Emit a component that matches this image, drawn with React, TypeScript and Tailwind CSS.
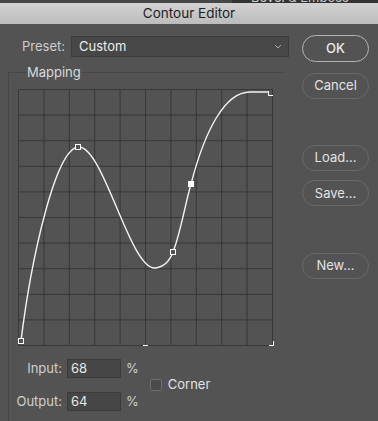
import React from "react";

const vLines = Array.from({ length: 11 }, (_, i) => 1.5 + i * 25.4);
const hLines = Array.from({ length: 11 }, (_, i) => 1.5 + i * 25.6);

const CurveGrid = () => {
  return (
    <svg width="260" height="262" className="block overflow-visible">
      {vLines.map((x) => (
        <line key={"v" + x} x1={x} y1={1.5} x2={x} y2={257.5} stroke="#383838" strokeWidth="1" />
      ))}
      {hLines.map((y) => (
        <line key={"h" + y} x1={1.5} y1={y} x2={255.5} y2={y} stroke="#383838" strokeWidth="1" />
      ))}
      <path
        d="M4,253 C14,172 38,62 61,59 C86,56 113,182 138,180 C148,179 153,172 156,164 C163,147 168,117 174,96 C188,42 208,4 233,4 L252,4"
        fill="none"
        stroke="#f2f2f2"
        strokeWidth="1.4"
      />
      <rect x="1.5" y="250.5" width="5" height="5" fill="#535353" stroke="#fff" strokeWidth="1" />
      <rect x="58.5" y="56.5" width="5" height="5" fill="#535353" stroke="#fff" strokeWidth="1" />
      <rect x="153.5" y="161.5" width="5" height="5" fill="#535353" stroke="#fff" strokeWidth="1" />
      <rect x="171" y="93" width="6" height="6" fill="#fff" />
      <path d="M251.5,3 V7.5 H256" fill="none" stroke="#fff" strokeWidth="1" />
      <path d="M126,257.5 H131" fill="none" stroke="#fff" strokeWidth="1" />
      <path d="M252,257.5 H256.5 V253" fill="none" stroke="#fff" strokeWidth="1" />
    </svg>
  );
};

const PillButton = ({ label, primary }: { label: string; primary?: boolean }) => {
  return (
    <button
      className={
        primary
          ? "w-[67px] h-[27px] rounded-full border-[1.5px] border-[#b4b4b4] text-[13px] font-medium text-[#ececec]"
          : "w-[67px] h-[26px] rounded-full border border-[#6a6a6a] text-[13px] text-[#e2e2e2]"
      }
    >
      {label}
    </button>
  );
};

const NumberRow = ({ label, value }: { label: string; value: string }) => {
  return (
    <div className="flex items-center">
      <span className="w-[53px] text-right text-[13px] text-[#cfcfcf]">{label}</span>
      <div className="ml-[5px] w-[54px] h-[19px] bg-[#464646] border border-[#3b3b3b] pl-[3px] text-[13px] leading-[17px] text-[#e6e6e6]">
        {value}
      </div>
      <span className="ml-[5px] text-[13px] text-[#cfcfcf]">%</span>
    </div>
  );
};

export default function App() {
  return (
    <div className="w-[378px] h-[421px] overflow-hidden bg-[#535353] font-['Inter','Liberation_Sans',sans-serif]">
      <div className="h-[3px] flex bg-[#474747]">
        <div className="ml-[232px] flex-1 bg-[#333] overflow-hidden">
          <div className="-mt-[10px] pl-[19px] text-[13px] leading-[14px] text-[#c9c9c9]">Bevel &amp; Emboss</div>
        </div>
      </div>
      <div className="h-[21px] flex items-center justify-center bg-gradient-to-b from-[#d2d2d2] to-[#bcbcbc] text-[13.5px] text-[#1f1f1f]">
        Contour Editor
      </div>
      <div className="flex">
        <div className="w-[291px] pt-[12px]">
          <div className="flex items-center pl-[22px]">
            <span className="text-[13px] text-[#cdcdcd]">Preset:</span>
            <div className="ml-[6px] w-[218px] h-[21px] flex items-center justify-between bg-[#474747] border border-[#3c3c3c] pl-[7px] pr-[6px]">
              <span className="text-[13px] text-[#ececec]">Custom</span>
              <svg width="8" height="5" viewBox="0 0 8 5">
                <path d="M1,1 L4,4 L7,1" fill="none" stroke="#a8a8a8" strokeWidth="1" />
              </svg>
            </div>
          </div>
          <fieldset className="ml-[8px] mt-[7px] w-[277px] h-[380px] border border-[#464646] border-r-transparent pl-0">
            <legend className="ml-[17px] px-[1px] text-[13px] leading-[16px] text-[#dadada]">Mapping</legend>
            <div className="ml-[8px] mt-[8px]">
              <CurveGrid />
            </div>
            <div className="mt-[9px] flex items-center">
              <div className="flex flex-col gap-[13px]">
                <NumberRow label="Input:" value="68" />
                <NumberRow label="Output:" value="64" />
              </div>
              <div className="ml-[11px] flex items-center">
                <div className="w-[12px] h-[12px] rounded-[2px] border border-[#6e6e6e] bg-[#4b4b4b]" />
                <span className="ml-[6px] text-[13px] text-[#e2e2e2]">Corner</span>
              </div>
            </div>
          </fieldset>
        </div>
        <div className="pl-[11px] pt-[11px] flex flex-col">
          <PillButton label="OK" primary />
          <div className="mt-[10px]">
            <PillButton label="Cancel" />
          </div>
          <div className="mt-[45px]">
            <PillButton label="Load..." />
          </div>
          <div className="mt-[9px]">
            <PillButton label="Save..." />
          </div>
          <div className="mt-[46px]">
            <PillButton label="New..." />
          </div>
        </div>
      </div>
    </div>
  );
}
